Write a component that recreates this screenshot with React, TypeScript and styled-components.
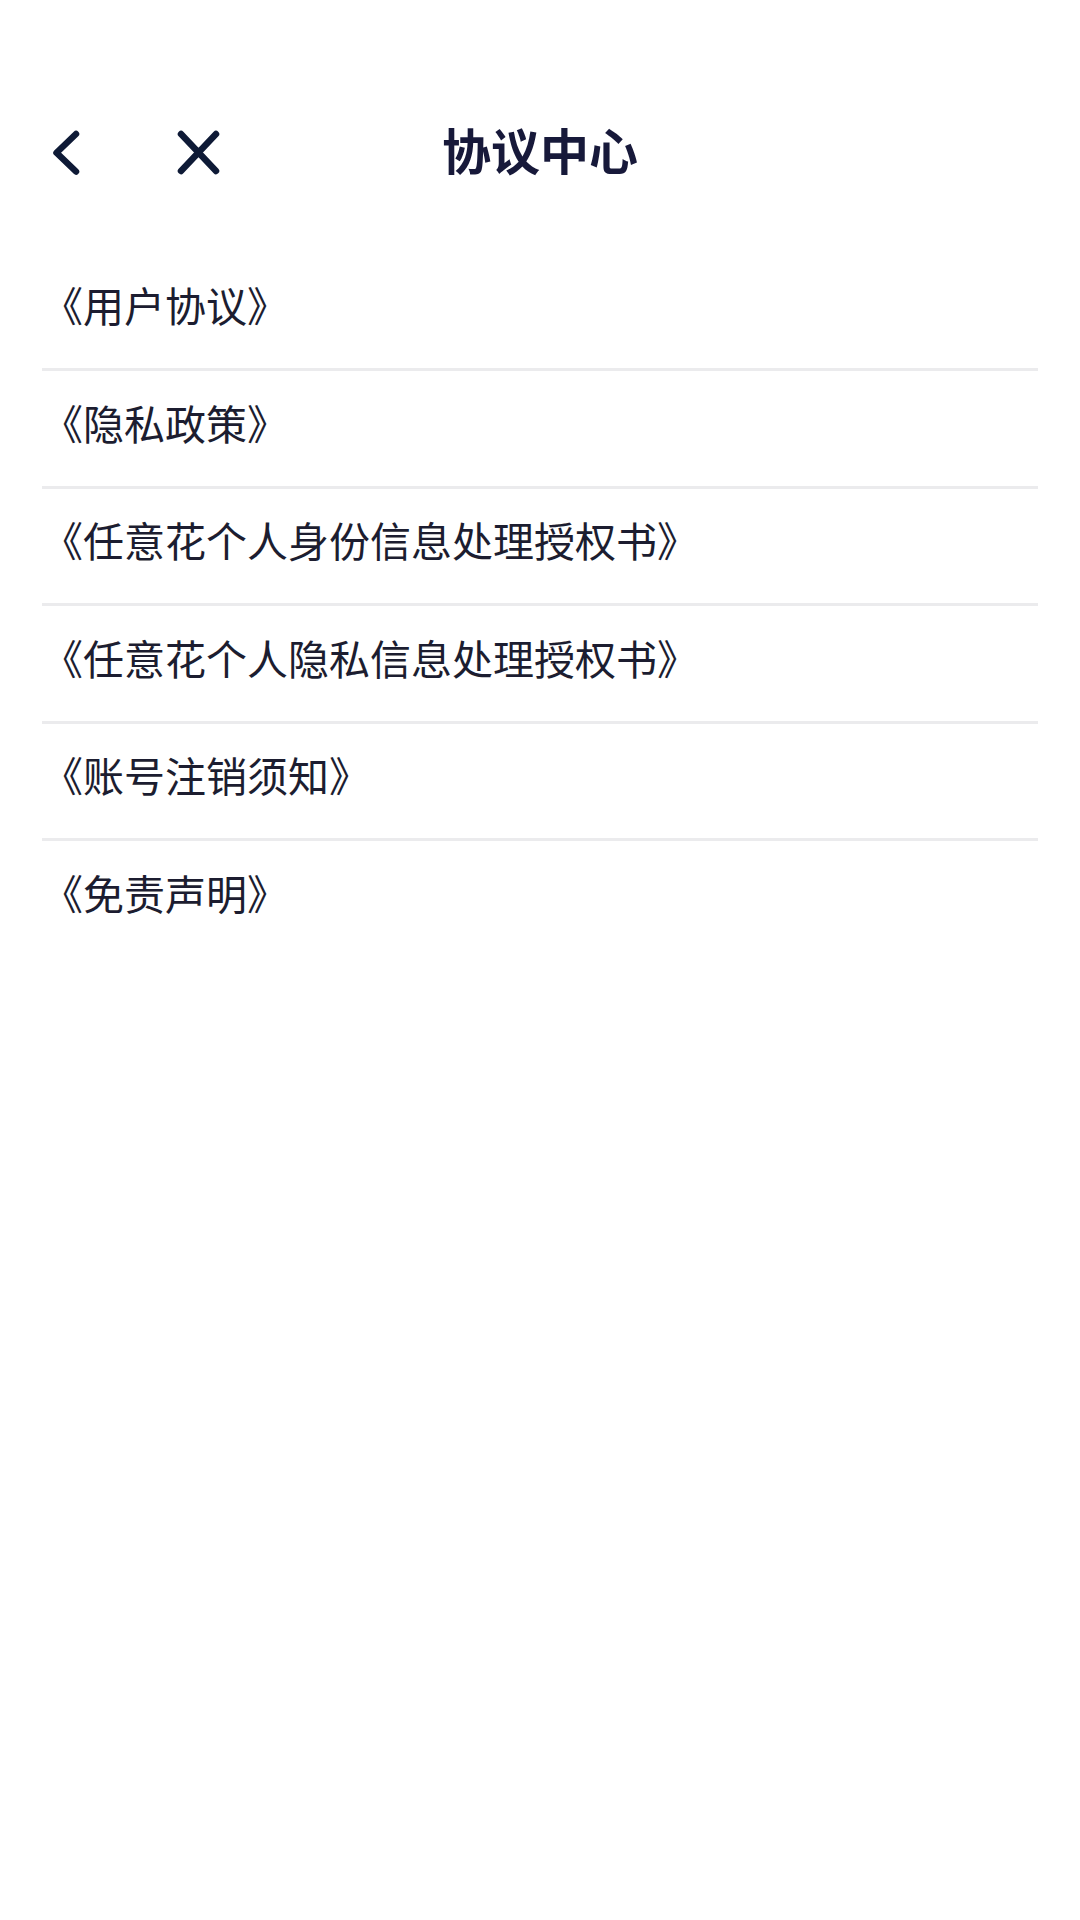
import React from "react";
import styled, { createGlobalStyle } from "styled-components";

const GlobalStyle = createGlobalStyle`
  html, body {
    margin: 0;
    padding: 0;
    background: #ffffff;
  }
  body {
    font-family: "Noto Sans CJK SC", "Noto Sans", sans-serif;
  }
`;

const Page = styled.div`
  width: 1080px;
  min-height: 1920px;
  background: #ffffff;
  padding-top: 98px;
  box-sizing: border-box;
`;

const Header = styled.header`
  display: grid;
  grid-template-columns: 1fr auto 1fr;
  align-items: center;
  height: 110px;
`;

const NavButtons = styled.div`
  display: flex;
  align-items: center;
  gap: 84px;
  padding-left: 42px;
`;

const IconButton = styled.button`
  width: 48px;
  height: 48px;
  padding: 0;
  border: none;
  background: transparent;
  display: flex;
  align-items: center;
  justify-content: center;
  cursor: pointer;
`;

const Title = styled.h1`
  margin: 0 0 10px;
  font-family: "Noto Sans CJK SC", sans-serif;
  font-size: 49px;
  font-weight: 700;
  color: #17193a;
  line-height: 1;
  letter-spacing: 0;
`;

const List = styled.ul`
  list-style: none;
  margin: 45.5px 0 0;
  padding: 0 42px;
`;

const Item = styled.li<{ $last?: boolean }>`
  padding: 30.5px 0 44px;
  border-bottom: ${(p) => (p.$last ? "none" : "3px solid #ebebed")};
  font-family: "Noto Sans CJK SC", sans-serif;
  font-size: 41px;
  line-height: 40px;
  color: #1c1d30;
  white-space: nowrap;
`;

const ICON = "#0e1a36";

const BackIcon = () => (
  <svg width="48" height="48" viewBox="0 0 48 48" fill="none">
    <path
      d="M34 5 L14.5 23.75 L34 42.5"
      stroke={ICON}
      strokeWidth="6.5"
      strokeLinecap="round"
      strokeLinejoin="round"
    />
  </svg>
);

const CloseIcon = () => (
  <svg width="48" height="48" viewBox="0 0 48 48" fill="none">
    <path
      d="M7 5 L42 42 M42 5 L7 42"
      stroke={ICON}
      strokeWidth="6.5"
      strokeLinecap="round"
    />
  </svg>
);

const items = [
  "《用户协议》",
  "《隐私政策》",
  "《任意花个人身份信息处理授权书》",
  "《任意花个人隐私信息处理授权书》",
  "《账号注销须知》",
  "《免责声明》",
];

export default function App() {
  return (
    <Page>
      <GlobalStyle />
      <Header>
        <NavButtons>
          <IconButton aria-label="返回">
            <BackIcon />
          </IconButton>
          <IconButton aria-label="关闭">
            <CloseIcon />
          </IconButton>
        </NavButtons>
        <Title>协议中心</Title>
        <div />
      </Header>
      <List>
        {items.map((t, i) => (
          <Item key={t} $last={i === items.length - 1}>
            {t}
          </Item>
        ))}
      </List>
    </Page>
  );
}
